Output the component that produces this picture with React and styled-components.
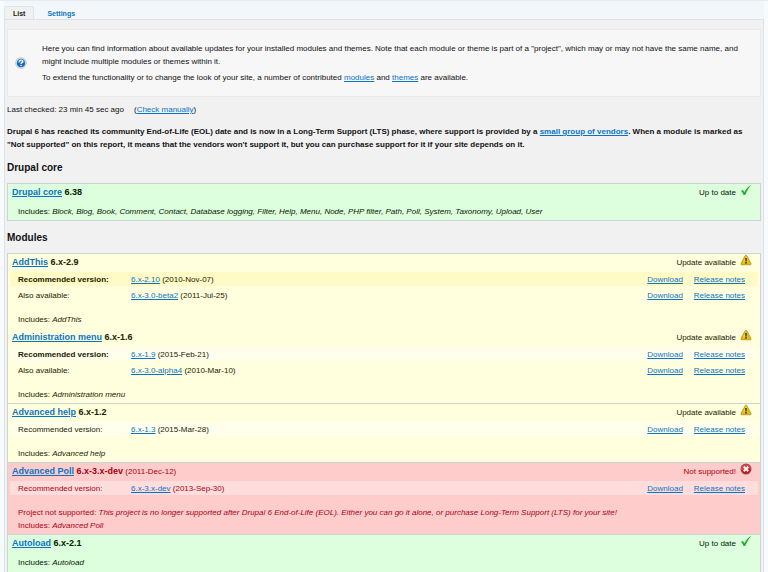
import React from "react";
import styled, { createGlobalStyle } from "styled-components";

const GlobalStyle = createGlobalStyle`
  *, *::before, *::after { box-sizing: border-box; }
  body {
    margin: 0;
    background: #f8fbfd;
    color: #111;
    font-family: "Liberation Sans", Arial, Helvetica, sans-serif;
    font-size: 8px;
    line-height: 13px;
  }
`;

const tones = {
  ok: { background: "#ddffdd", band: "#ddffdd", text: "#002200" },
  update: { background: "#ffffdd", band: "#ffffec", text: "#222200" },
  security: { background: "#ffffdd", band: "#fffac6", text: "#222200" },
  error: { background: "#ffcccc", band: "#ffdddd", text: "#aa0011" },
};

const Page = styled.div`
  display: flex;
  flex-direction: column;
  min-height: 100vh;
  padding: 0 4px;
  border-top: 1px solid #e6edf2;
`;

const Tabs = styled.nav`
  display: flex;
  align-items: flex-end;
  padding-top: 5px;
  background: #f3f7f9;
`;

const Tab = styled.a`
  height: ${(p) => (p.$active ? "14px" : "13px")};
  margin-bottom: ${(p) => (p.$active ? "-1px" : "0")};
  padding: 0 ${(p) => (p.$active ? "8px" : "12px")};
  border: 1px solid ${(p) => (p.$active ? "#dbe5e8" : "transparent")};
  border-bottom: 0;
  border-radius: 3px 3px 0 0;
  background: ${(p) => (p.$active ? "#f1f1f1" : "transparent")};
  color: ${(p) => (p.$active ? "#222" : "#0f74c8")};
  font-size: 7px;
  font-weight: bold;
  line-height: 13px;
  text-decoration: none;
`;

const Content = styled.main`
  display: flex;
  flex: 1;
  flex-direction: column;
  padding: 9px 2px 0;
  border: solid #dbe3e8;
  border-width: 1px 1px 0;
  background: #f1f1f1;
`;

const Help = styled.section`
  display: flex;
  align-items: center;
  gap: 15px;
  padding: 12px 9px 12px 7px;
  border: 1px solid #eaeaea;
  background: #f7f7f7;
`;

const HelpText = styled.div`
  display: grid;
  flex: 1;
  gap: 3px;
`;

const Paragraph = styled.p`
  margin: 0;
`;

const Link = styled.a`
  color: #0a74c4;
  text-decoration: underline;
`;

const LastChecked = styled.p`
  display: flex;
  gap: 10px;
  margin: 6px 0 0;
`;

const Notice = styled.p`
  margin: 9px 0 0;
  padding-right: 4px;
  font-weight: bold;
`;

const Heading = styled.h3`
  margin: 10px 0 9px;
  font-size: 10px;
  line-height: 13px;
`;

const ProjectList = styled.div`
  display: flex;
  flex-direction: column;
  border: solid #ccd4d4;
  border-width: 0 1px 1px;

  &:last-child {
    flex: 1;
    border-bottom: 0;
  }
`;

const Project = styled.article`
  padding: 0 2px 2px;
  border-top: 1px solid ${(p) => (p.$joined ? tones[p.$tone].background : "#ccd4d4")};
  background: ${(p) => tones[p.$tone].background};
  color: ${(p) => tones[p.$tone].text};

  ${ProjectList}:last-child > &:last-child {
    flex: 1;
  }
`;

const TitleRow = styled.header`
  display: flex;
  justify-content: space-between;
  height: 16px;
  padding: 0 6px 0 2px;
  line-height: 16px;
`;

const Title = styled.h4`
  margin: 0;
  font-size: 9px;
`;

const ReleaseDate = styled.span`
  font-size: 8px;
  font-weight: normal;
`;

const Status = styled.span`
  display: flex;
  align-items: flex-start;
  gap: 4px;
  line-height: 18px;
`;

const VersionTable = styled.table`
  width: 100%;
  border-spacing: 0 2px;
  table-layout: fixed;
`;

const VersionRow = styled.tr`
  height: 14px;
  background: ${(p) => (p.$banded ? tones[p.$tone].band : "transparent")};
`;

const LabelCell = styled.th`
  width: 121px;
  padding: 0 0 0 8px;
  font-weight: ${(p) => (p.$strong ? "bold" : "normal")};
  text-align: left;
`;

const VersionCell = styled.td`
  padding: 0;
`;

const LinksCell = styled.td`
  width: 140px;
  padding: 0 13px 0 0;
`;

const Links = styled.div`
  display: flex;
  justify-content: flex-end;
  gap: 11px;
`;

const Details = styled.div`
  padding: ${(p) => (p.$afterVersions ? "9px" : "5px")} 8px 0;
`;

const HelpIcon = () => (
  <svg width="12" height="12" viewBox="0 0 24 24" aria-hidden="true">
    <circle cx="12" cy="12" r="11.5" fill="#b9bec3" />
    <circle cx="12" cy="12" r="10" fill="#e6e9ec" />
    <circle cx="12" cy="12" r="8.5" fill="#1769bd" />
    <path d="M4.5 11a7.7 7.7 0 0 1 15 0c-4 2-11 2-15 0z" fill="#4a98dc" />
    <path d="M8.7 9.2c.3-4.4 7-4.1 6.7-.1-.2 2.3-3.1 2.5-3.2 5" fill="none" stroke="#fff" strokeWidth="2.4" />
    <circle cx="12.1" cy="17.1" r="1.5" fill="#fff" />
  </svg>
);

const CheckIcon = () => (
  <svg width="12" height="12" viewBox="0 0 24 24" aria-hidden="true">
    <path
      d="M2 13.5l3.5-1.5c1.5 1.4 2.3 2.8 3.2 4.5C12 10 16 5 22.5 1.5 17.8 7.5 13.7 14 10.2 22H7.2C6 18.7 4.4 15.8 2 13.5z"
      fill="#21b02b"
    />
  </svg>
);

const WarningIcon = () => (
  <svg width="12" height="12" viewBox="0 0 24 24" aria-hidden="true">
    <path d="M12 2.5c.8 0 1.4.5 1.8 1.2L22 19c.7 1.4-.1 2.5-1.6 2.5H3.6C2.1 21.5 1.3 20.4 2 19l8.2-15.3c.4-.7 1-1.2 1.8-1.2z" fill="#eabd08" stroke="#8c7830" strokeWidth="1.2" />
    <path d="M12 4.5l3 5.5c-2 3-5 5-9 6z" fill="#f6d740" />
    <path d="M10.4 8h3.2l-.6 7h-2z" fill="#282000" />
    <circle cx="12" cy="17.8" r="1.6" fill="#282000" />
  </svg>
);

const ErrorIcon = () => (
  <svg width="12" height="12" viewBox="0 0 24 24" aria-hidden="true">
    <circle cx="12" cy="12" r="11" fill="#8d4a50" />
    <circle cx="12" cy="12" r="9.7" fill="#d8484a" />
    <path d="M3 14c5 1.5 12 1 18-3a9 9 0 0 1-18 3z" fill="#bf1d25" />
    <path d="M7.5 7.5l9 9M16.5 7.5l-9 9" stroke="#fff" strokeWidth="3.6" />
  </svg>
);

const statuses = {
  ok: { label: "Up to date", Icon: CheckIcon },
  update: { label: "Update available", Icon: WarningIcon },
  security: { label: "Update available", Icon: WarningIcon },
  error: { label: "Not supported!", Icon: ErrorIcon },
};

const coreModules =
  "Block, Blog, Book, Comment, Contact, Database logging, Filter, Help, Menu, Node, PHP filter, Path, Poll, System, Taxonomy, Upload, User";

const modules = [
  {
    name: "AddThis",
    version: "6.x-2.9",
    tone: "security",
    includes: "AddThis",
    releases: [
      { label: "Recommended version:", version: "6.x-2.10", date: "2010-Nov-07", strong: true },
      { label: "Also available:", version: "6.x-3.0-beta2", date: "2011-Jul-25" },
    ],
  },
  {
    name: "Administration menu",
    version: "6.x-1.6",
    tone: "update",
    joined: true,
    includes: "Administration menu",
    releases: [
      { label: "Recommended version:", version: "6.x-1.9", date: "2015-Feb-21", strong: true },
      { label: "Also available:", version: "6.x-3.0-alpha4", date: "2010-Mar-10" },
    ],
  },
  {
    name: "Advanced help",
    version: "6.x-1.2",
    tone: "update",
    includes: "Advanced help",
    releases: [{ label: "Recommended version:", version: "6.x-1.3", date: "2015-Mar-28" }],
  },
  {
    name: "Advanced Poll",
    version: "6.x-3.x-dev",
    released: "2011-Dec-12",
    tone: "error",
    includes: "Advanced Poll",
    note: "This project is no longer supported after Drupal 6 End-of-Life (EOL). Either you can go it alone, or purchase Long-Term Support (LTS) for your site!",
    releases: [{ label: "Recommended version:", version: "6.x-3.x-dev", date: "2013-Sep-30" }],
  },
  { name: "Autoload", version: "6.x-2.1", tone: "ok", includes: "Autoload", releases: [] },
];

function ProjectEntry({ name, version, released, tone, joined, includes, note, releases }) {
  const { label, Icon } = statuses[tone];
  return (
    <Project $tone={tone} $joined={joined}>
      <TitleRow>
        <Title>
          <Link href="#">{name}</Link> {version}
          {released && <ReleaseDate> ({released})</ReleaseDate>}
        </Title>
        <Status>
          {label}
          <Icon />
        </Status>
      </TitleRow>
      {releases.length > 0 && (
        <VersionTable>
          <tbody>
            {releases.map((release, index) => (
              <VersionRow key={release.version} $tone={tone} $banded={index === 0}>
                <LabelCell scope="row" $strong={release.strong}>{release.label}</LabelCell>
                <VersionCell>
                  <Link href="#">{release.version}</Link> ({release.date})
                </VersionCell>
                <LinksCell>
                  <Links>
                    <Link href="#">Download</Link>
                    <Link href="#">Release notes</Link>
                  </Links>
                </LinksCell>
              </VersionRow>
            ))}
          </tbody>
        </VersionTable>
      )}
      <Details $afterVersions={releases.length > 0}>
        {note && <Paragraph>Project not supported: <em>{note}</em></Paragraph>}
        <Paragraph>Includes: <em>{includes}</em></Paragraph>
      </Details>
    </Project>
  );
}

export default function App() {
  return (
    <>
      <GlobalStyle />
      <Page>
        <Tabs>
          <Tab href="#" $active aria-current="page">List</Tab>
          <Tab href="#">Settings</Tab>
        </Tabs>
        <Content>
          <Help>
            <HelpIcon />
            <HelpText>
              <Paragraph>
                Here you can find information about available updates for your installed modules and
                themes. Note that each module or theme is part of a "project", which may or may not
                have the same name, and might include multiple modules or themes within it.
              </Paragraph>
              <Paragraph>
                To extend the functionality or to change the look of your site, a number of
                contributed <Link href="#">modules</Link> and <Link href="#">themes</Link> are
                available.
              </Paragraph>
            </HelpText>
          </Help>
          <LastChecked>
            <span>Last checked: 23 min 45 sec ago</span>
            <span>(<Link href="#">Check manually</Link>)</span>
          </LastChecked>
          <Notice>
            Drupal 6 has reached its community End-of-Life (EOL) date and is now in a Long-Term
            Support (LTS) phase, where support is provided by a{" "}
            <Link href="#">small group of vendors</Link>. When a module is marked as "Not supported"
            on this report, it means that the vendors won't support it, but you can purchase support
            for it if your site depends on it.
          </Notice>
          <Heading>Drupal core</Heading>
          <ProjectList>
            <ProjectEntry name="Drupal core" version="6.38" tone="ok" includes={coreModules} releases={[]} />
          </ProjectList>
          <Heading>Modules</Heading>
          <ProjectList>
            {modules.map((module) => (
              <ProjectEntry key={module.name} {...module} />
            ))}
          </ProjectList>
        </Content>
      </Page>
    </>
  );
}
